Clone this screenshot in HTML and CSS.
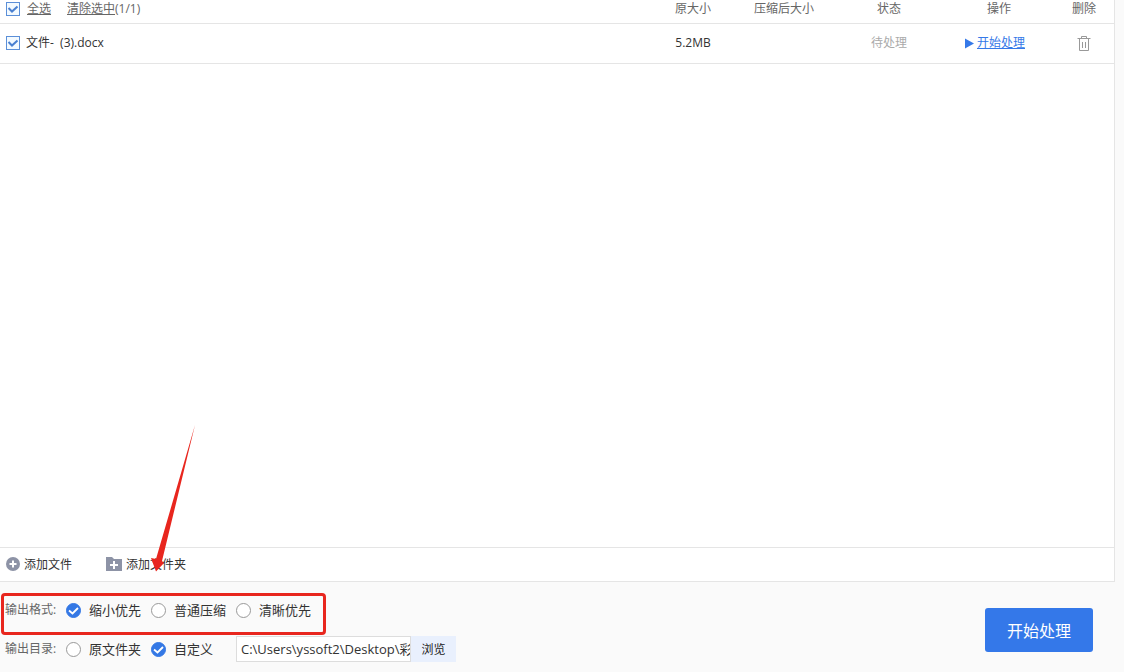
FILE: index.html
```html
<!DOCTYPE html>
<html lang="zh-CN">
<head>
<meta charset="utf-8">
<title>文件压缩</title>
<link rel="stylesheet" href="styles.css">
</head>
<body>
<main class="app">
  <section class="panel">
    <div class="list">
      <table class="files">
        <colgroup>
          <col><col class="col-size"><col class="col-after"><col class="col-state"><col class="col-action"><col class="col-delete">
        </colgroup>
        <thead>
          <tr>
            <th class="name">
              <div class="cell">
                <input type="checkbox" class="check" id="all" checked>
                <label for="all" class="underlined select-all">全选</label>
                <span><a href="#" class="underlined">清除选中</a>(1/1)</span>
              </div>
            </th>
            <th>原大小</th><th>压缩后大小</th><th>状态</th><th>操作</th><th>删除</th>
          </tr>
        </thead>
        <tbody>
          <tr>
            <td class="name">
              <div class="cell">
                <input type="checkbox" class="check" id="file1" checked>
                <label for="file1">文件-&nbsp; (3).docx</label>
              </div>
            </td>
            <td>5.2MB</td>
            <td></td>
            <td class="pending">待处理</td>
            <td>
              <a href="#" class="run">
                <svg class="play" viewBox="0 0 9 11" aria-hidden="true"><path d="M0 0.500 9 5.500 0 10.500Z"/></svg>
                <span class="run-text">开始处理</span>
              </a>
            </td>
            <td>
              <button type="button" class="trash" aria-label="删除">
                <svg viewBox="0 0 14 16" aria-hidden="true"><path d="M0.5 2.5H13.5M4.5 2.5V0.5H9.5V2.5M2.5 2.5V14.5H11.5V2.5M5.5 6V12M8.5 6V12"/></svg>
              </button>
            </td>
          </tr>
        </tbody>
      </table>
    </div>
    <div class="toolbar">
      <button type="button" class="add">
        <svg class="icon-plus" viewBox="0 0 14 14" aria-hidden="true"><circle cx="7" cy="7" r="7" fill="#8d93a6"/><path d="M7 3.5V10.5M3.5 7H10.5" stroke="#fff" stroke-width="2"/></svg>
        添加文件
      </button>
      <button type="button" class="add">
        <svg class="icon-folder" viewBox="0 0 16 14" aria-hidden="true"><path d="M0 0H6L8 2H16V14H0Z" fill="#8d93a6"/><path d="M8 4V12M4 8H12" stroke="#fff" stroke-width="2"/></svg>
        添加文件夹
      </button>
    </div>
  </section>
  <footer class="settings">
    <div class="options">
      <div class="row" role="radiogroup" aria-label="输出格式">
        <span class="caption">输出格式:</span>
        <label class="option"><input type="radio" name="format" class="radio" checked>缩小优先</label>
        <label class="option"><input type="radio" name="format" class="radio">普通压缩</label>
        <label class="option"><input type="radio" name="format" class="radio">清晰优先</label>
      </div>
      <div class="row" role="radiogroup" aria-label="输出目录">
        <span class="caption">输出目录:</span>
        <label class="option"><input type="radio" name="dir" class="radio">原文件夹</label>
        <label class="option"><input type="radio" name="dir" class="radio" checked>自定义</label>
        <input type="text" class="path" aria-label="自定义目录" value="C:\Users\yssoft2\Desktop\彩">
        <button type="button" class="browse">浏览</button>
      </div>
    </div>
    <button type="button" class="start">开始处理</button>
    <div class="highlight"></div>
    <svg class="arrow" viewBox="0 0 48 148" aria-hidden="true"><path d="M46 1 13 137 15 139 7 147.500 2 134 7 135Z"/></svg>
  </footer>
</main>
</body>
</html>
```
FILE: styles.css
```css
* { box-sizing: border-box; }

body {
  margin: 0;
  background: #fafafa;
  color: #333;
  font: 12px/18px "Open Sans", "Noto Sans CJK SC", sans-serif;
}

button, input {
  margin: 0;
  font-family: inherit;
  color: inherit;
}

button {
  padding: 0;
  border: 0;
  background: none;
  cursor: pointer;
}

.app {
  display: flex;
  flex-direction: column;
  min-height: 100vh;
}

.panel {
  display: flex;
  flex: 1;
  flex-direction: column;
  margin-right: 9px;
  border-right: 1px solid #e5e5e5;
  border-bottom: 1px solid #e5e5e5;
  background: #fff;
}

.list { flex: 1; }

.files {
  width: 100%;
  table-layout: fixed;
  border-spacing: 0;
}

.col-size { width: 82px; }
.col-after { width: 100px; }
.col-state, .col-action { width: 110px; }
.col-delete { width: 60px; }

.files th, .files td {
  padding: 0;
  border-bottom: 1px solid #e5e5e5;
  text-align: center;
}

.files th {
  padding-bottom: 5px;
  color: #666;
  font-weight: 400;
}

.files td {
  height: 40px;
  padding-bottom: 1px;
}

.files .name {
  padding-left: 6px;
  text-align: left;
}

.cell {
  display: flex;
  align-items: center;
  gap: 6px;
}

.select-all { margin: 0 10px 0 1px; }

.underlined {
  color: inherit;
  text-decoration: underline;
}

.check, .radio {
  flex: none;
  appearance: none;
  background: #fff center / 100% no-repeat;
}

.check {
  width: 14px;
  height: 14px;
  border: 1px solid #5b8fd8;
  background-color: #f3faff;
}

.check:checked {
  background-image: url("data:image/svg+xml,%3Csvg xmlns='http://www.w3.org/2000/svg' viewBox='0 0 12 12'%3E%3Cpath d='M1.500 5 5 8.500 10.500 3.500' fill='none' stroke='%234a80d0' stroke-width='2'/%3E%3C/svg%3E");
}

.files .pending { color: #aaa; }

.run {
  display: inline-flex;
  align-items: center;
  gap: 3px;
  margin-right: 8px;
  color: #3579e8;
  text-decoration: none;
  vertical-align: middle;
}

.run-text { text-decoration: underline; }

.play {
  width: 9px;
  height: 11px;
  fill: #3579e8;
}

.trash {
  display: inline-flex;
  vertical-align: middle;
}

.trash svg {
  width: 14px;
  height: 16px;
  fill: none;
  stroke: #999;
}

.toolbar {
  display: flex;
  gap: 34px;
  height: 34px;
  padding: 0 0 1px 6px;
  border-top: 1px solid #e5e5e5;
}

.add {
  display: flex;
  align-items: center;
  gap: 4px;
  font-size: 12px;
}

.icon-plus { width: 14px; height: 14px; }
.icon-folder { width: 16px; height: 14px; }

.settings {
  position: relative;
  display: flex;
  align-items: center;
  justify-content: space-between;
  padding: 15px 31px 10px 5px;
}

.options {
  display: flex;
  flex-direction: column;
  gap: 13px;
}

.row {
  display: flex;
  align-items: center;
  height: 26px;
}

.caption {
  width: 61px;
  color: #666;
}

.option {
  display: flex;
  align-items: center;
  gap: 8px;
  width: 85px;
  font-size: 13px;
}

.radio {
  width: 15px;
  height: 15px;
  border: 1px solid #999;
  border-radius: 50%;
}

.radio:checked {
  border-color: #3478e5;
  background-color: #3478e5;
  background-image: url("data:image/svg+xml,%3Csvg xmlns='http://www.w3.org/2000/svg' viewBox='0 0 13 13'%3E%3Cpath d='M2 6.500 5.500 9.500 11 4' fill='none' stroke='white' stroke-width='1.800'/%3E%3C/svg%3E");
}

.path {
  width: 175px;
  height: 26px;
  padding: 0 0 2px 4px;
  border: 1px solid #ddd;
  background: #fff;
  font-size: 13px;
}

.browse {
  width: 45px;
  height: 26px;
  background: #e9f0fd;
  color: #222;
  font-size: 12px;
}

.start {
  width: 108px;
  height: 44px;
  border-radius: 3px;
  background: #3478e9;
  color: #fff;
  font-size: 16px;
}

.highlight {
  position: absolute;
  top: 11px;
  left: 1px;
  width: 325px;
  height: 42px;
  border: 3px solid #e8261e;
  border-radius: 4px;
  pointer-events: none;
}

.arrow {
  position: absolute;
  top: -158px;
  left: 149px;
  width: 48px;
  height: 148px;
  fill: #e8261e;
  pointer-events: none;
}
```
